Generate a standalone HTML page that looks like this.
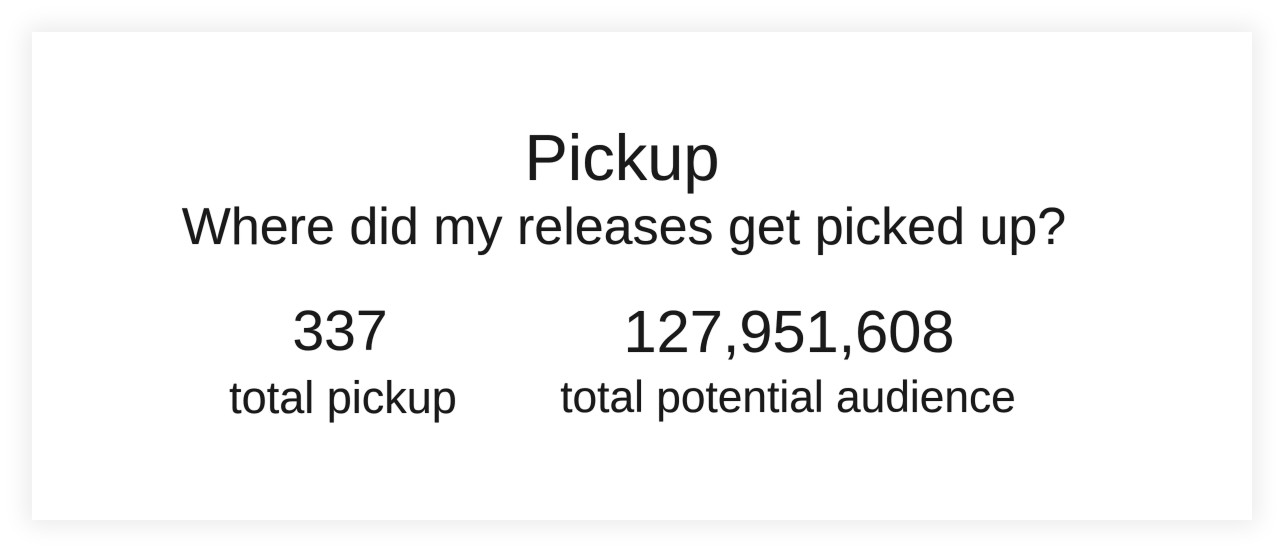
<!DOCTYPE html>
<html><head><style>
html,body{margin:0;padding:0;background:#fff;}
body{width:1284px;height:552px;position:relative;overflow:hidden;font-family:"Liberation Sans",Arial,sans-serif;color:#1a1a1a;}
.card{position:absolute;left:32px;top:32px;width:1220px;height:488px;background:#fff;box-shadow:0 0 22px 6px rgba(0,0,0,0.08);}
.t{position:absolute;white-space:nowrap;line-height:1;transform:translateX(-50%);text-shadow:0 0 1px rgba(0,0,0,0.5);}
</style></head><body>
<div class="card"></div>
<div class="t" style="left:622px;top:125px;font-size:65px;">Pickup</div>
<div class="t" style="left:624px;top:201px;font-size:52px;">Where did my releases get picked up?</div>
<div class="t" style="left:340px;top:303px;font-size:57px;">337</div>
<div class="t" style="left:789px;top:302px;font-size:59.5px;">127,951,608</div>
<div class="t" style="left:343px;top:375px;font-size:45px;">total pickup</div>
<div class="t" style="left:788px;top:376px;font-size:44.3px;">total potential audience</div>
</body></html>
